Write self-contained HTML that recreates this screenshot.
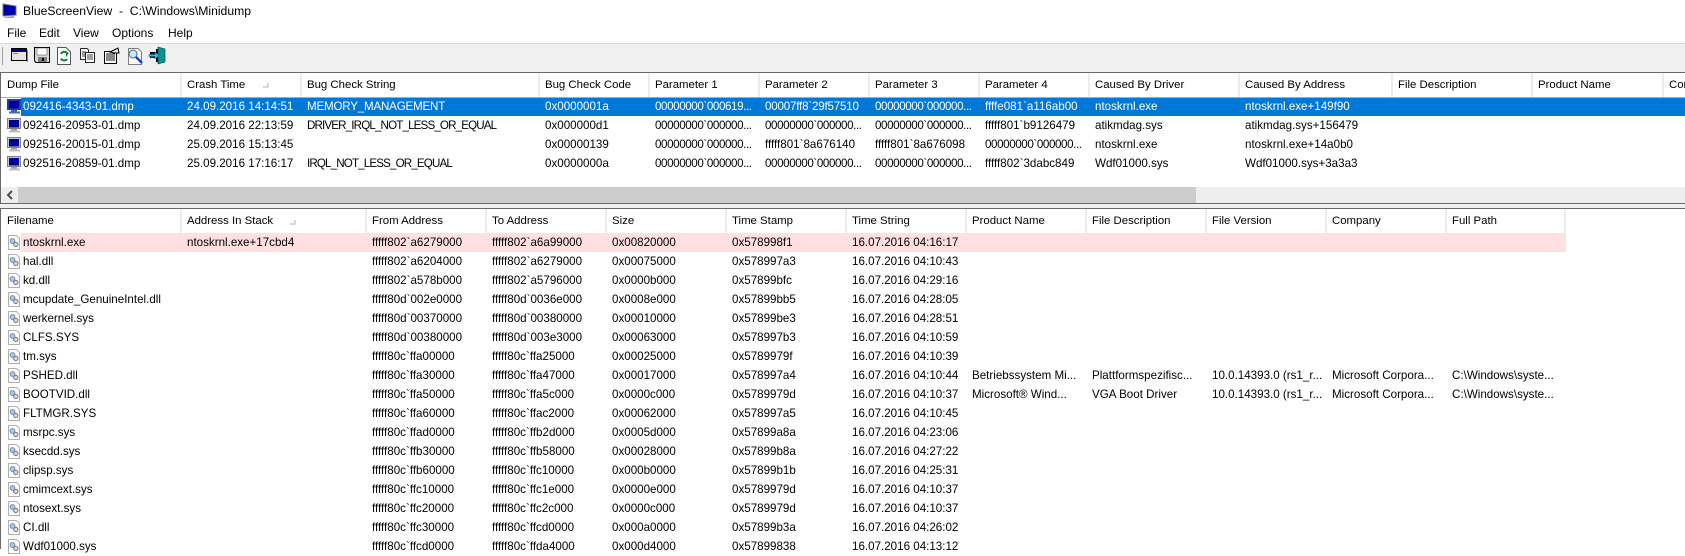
<!DOCTYPE html>
<html><head><meta charset="utf-8"><title>BlueScreenView</title>
<style>
html,body{margin:0;padding:0;background:#fff}
body{width:1685px;height:549px;overflow:hidden;position:relative;font-family:"Liberation Sans",sans-serif;font-size:11.6px;color:#000}
.a{position:absolute;white-space:nowrap}
.b{z-index:5}
table{position:absolute;border-collapse:separate;border-spacing:0;table-layout:fixed;left:0}
td{padding:0 0 0 7px;height:19px;line-height:19px;white-space:nowrap;overflow:hidden;box-sizing:border-box}
td:first-child{padding-left:23px;background:#fff;position:relative}
tr.h td{height:24px;line-height:24px;border-left:2px solid #ececec;padding-left:5px;font-size:11.4px}
tr.h td:first-child{padding-left:7px;border-left:0}
tr.s{background:#0078d7;color:#fff}
tr.s td{box-shadow:inset 0 1px 0 #e0a060}
tr.s td:first-child{color:#000}
tr.p{background:#ffdfdf}
td svg{position:absolute;left:7px;top:2px}
tr.s td:first-child span{position:absolute;left:21px;top:0;height:19px;width:160px;padding-left:2px;background:#0078d7;color:#fff;box-shadow:inset 0 1px 0 #e0a060}
.m{font-size:12px;top:26px}
.t{letter-spacing:-.4px}
.u{letter-spacing:-.85px}
.v{letter-spacing:-.2px}
.e{border-right:2px solid #ececec}
</style></head><body>
<svg width="0" height="0" style="position:absolute"><defs>
<symbol id="mon" viewBox="0 0 14 15"><rect x="0.5" y="0.5" width="13" height="10" fill="#c8c8c8" stroke="#808080"/><rect x="2" y="2" width="10" height="7.5" fill="#000099"/><rect x="4" y="11" width="6" height="1.5" fill="#a0a0a0"/><rect x="2" y="12.5" width="11" height="2" fill="#c0c0c0"/></symbol>
<symbol id="mons" viewBox="0 0 14 15"><rect x="0" y="0" width="14" height="11" fill="#1a3fae"/><rect x="2" y="2" width="10" height="7.5" fill="#000099"/><rect x="4" y="11" width="6" height="1.5" fill="#3060b0"/><rect x="2" y="12.5" width="11" height="2" fill="#3a70c0"/></symbol>
<symbol id="drv" viewBox="0 0 14 15"><path d="M1.5 .5H9.5L12.5 3.5V14.5H1.5Z" fill="#fff" stroke="#b0b0b0"/><circle cx="5.5" cy="6" r="2.4" fill="#b8c8dc" stroke="#6a8ab0"/><circle cx="8.8" cy="9.4" r="2.2" fill="#cfd8e4" stroke="#6a7a90"/></symbol>
</defs></svg>

<svg class="a" style="left:2px;top:3px" width="15" height="16" viewBox="0 0 15 16"><path d="M1 1L14 3V12L1 13Z" fill="#0000a8" stroke="#707080"/><path d="M2 14L12 13V15H3Z" fill="#a0a0a0"/></svg>
<div class="a" style="left:23px;top:3px;font-size:12.2px;line-height:16px;white-space:pre">BlueScreenView  -  C:\Windows\Minidump</div>
<div class="a m" style="left:7px">File</div>
<div class="a m" style="left:39px">Edit</div>
<div class="a m" style="left:73px">View</div>
<div class="a m" style="left:112px">Options</div>
<div class="a m" style="left:168px">Help</div>

<div class="a" style="left:0;top:43px;width:1685px;height:29px;background:#f0f0f0;border-top:1px solid #d8d8d8;box-sizing:border-box"></div>
<div class="a" style="left:2px;top:47px;width:1px;height:18px;background:#a0a0a0"></div>
<svg class="a" style="left:10px;top:46px" width="160" height="20" viewBox="0 0 160 20">
<rect x="1.5" y="2.5" width="15" height="12" fill="#e8e4d8" stroke="#000"/><rect x="2" y="3" width="14" height="3" fill="#000080"/><rect x="3" y="7" width="5" height="1" fill="#808080"/><rect x="17" y="4" width="1" height="12" fill="#808080"/>
<path d="M24.5 1.5H39.5V16.5H26L24.5 15Z" fill="#d8d8d0" stroke="#000"/><rect x="27" y="2" width="10" height="7" fill="#fff" stroke="#444" stroke-width=".5"/><rect x="28" y="11" width="9" height="5" fill="#808080"/><rect x="32" y="12" width="2" height="3" fill="#000"/>
<path d="M47.5 1.5H56L60.5 6V18.5H47.5Z" fill="#fff" stroke="#555"/><path d="M51 8C52 5 57 5 57 8L58 6.5M57 13C56 15 52 15 51 12.5" fill="none" stroke="#0a8a2a" stroke-width="2"/>
<path d="M70.5 2.5H77L78.5 4V6M70.5 2.5V13.5H75" fill="#fff" stroke="#222"/><rect x="75.5" y="6.5" width="9" height="10" fill="#fff" stroke="#222"/><path d="M77 9H83M77 11H83M77 13H83M72 6H76M72 8H75M72 10H75" stroke="#444"/>
<rect x="94.5" y="5.5" width="12" height="12" fill="#fff" stroke="#000"/><path d="M96 8H105M96 10H105M96 12H105M96 14H105" stroke="#111"/><path d="M100 6L108 2L109 7L104 7Z" fill="#e8e8e8" stroke="#000"/>
<path d="M118.5 2.5H128L131.5 6V18.5H118.5Z" fill="#fff" stroke="#808080"/><circle cx="123" cy="8" r="4" fill="#cfe8f4" stroke="#3a6a9a"/><path d="M126 11L132 17" stroke="#2040c0" stroke-width="2.5"/>
<path d="M140 6H146V3H148V16H146V12H140Z" fill="#000"/><path d="M148 1L155 3V16L148 18Z" fill="#109090" stroke="#004040" stroke-width=".6"/><path d="M139 8.5H145V6L149 9.5L145 13V10.5H139Z" fill="#20c8e8" stroke="#006080" stroke-width=".5"/>
</svg>

<div class="a b" style="left:0;top:72px;width:1685px;height:1px;background:#696969"></div>
<div class="a b" style="left:0;top:72px;width:1px;height:132px;background:#696969"></div>

<table style="top:73px;width:1685px">
<colgroup><col style="width:180px"><col style="width:120px"><col style="width:238px"><col style="width:110px"><col style="width:110px"><col style="width:110px"><col style="width:110px"><col style="width:110px"><col style="width:150px"><col style="width:153px"><col style="width:140px"><col style="width:131px"><col style="width:23px"></colgroup>
<tr class="h"><td>Dump File</td><td>Crash Time</td><td>Bug Check String</td><td>Bug Check Code</td><td>Parameter 1</td><td>Parameter 2</td><td>Parameter 3</td><td>Parameter 4</td><td>Caused By Driver</td><td>Caused By Address</td><td>File Description</td><td>Product Name</td><td>Cor</td></tr>
<tr class="s"><td><svg width="14" height="15"><use href="#mons"/></svg><span>092416-4343-01.dmp</span></td><td>24.09.2016 14:14:51</td><td class="v">MEMORY_MANAGEMENT</td><td>0x0000001a</td><td class="t">00000000`000619...</td><td class="v">00007ff8`29f57510</td><td class="t">00000000`000000...</td><td>ffffe081`a116ab00</td><td>ntoskrnl.exe</td><td>ntoskrnl.exe+149f90</td><td></td><td></td><td></td></tr>
<tr><td><svg width="14" height="15"><use href="#mon"/></svg>092416-20953-01.dmp</td><td>24.09.2016 22:13:59</td><td class="u">DRIVER_IRQL_NOT_LESS_OR_EQUAL</td><td>0x000000d1</td><td class="t">00000000`000000...</td><td class="t">00000000`000000...</td><td class="t">00000000`000000...</td><td>fffff801`b9126479</td><td>atikmdag.sys</td><td>atikmdag.sys+156479</td><td></td><td></td><td></td></tr>
<tr><td><svg width="14" height="15"><use href="#mon"/></svg>092516-20015-01.dmp</td><td>25.09.2016 15:13:45</td><td></td><td>0x00000139</td><td class="t">00000000`000000...</td><td>fffff801`8a676140</td><td>fffff801`8a676098</td><td class="t">00000000`000000...</td><td>ntoskrnl.exe</td><td>ntoskrnl.exe+14a0b0</td><td></td><td></td><td></td></tr>
<tr><td><svg width="14" height="15"><use href="#mon"/></svg>092516-20859-01.dmp</td><td>25.09.2016 17:16:17</td><td class="u">IRQL_NOT_LESS_OR_EQUAL</td><td>0x0000000a</td><td class="t">00000000`000000...</td><td class="t">00000000`000000...</td><td class="t">00000000`000000...</td><td>fffff802`3dabc849</td><td>Wdf01000.sys</td><td>Wdf01000.sys+3a3a3</td><td></td><td></td><td></td></tr>
</table>
<svg class="a" style="left:262px;top:81px" width="8" height="8"><path d="M1 6H6V2" fill="none" stroke="#b0b0b0"/></svg>

<div class="a" style="left:1px;top:187px;width:1684px;height:16px;background:#eee"></div>
<div class="a" style="left:18px;top:187px;width:1178px;height:16px;background:#cdcdcd"></div>
<svg class="a" style="left:5px;top:190px" width="10" height="10"><path d="M7 1L3 5L7 9" fill="none" stroke="#505050" stroke-width="2"/></svg>
<div class="a b" style="left:0;top:203px;width:1685px;height:1px;background:#696969"></div>
<div class="a" style="left:0;top:204px;width:1685px;height:4px;background:#f0f0f0"></div>
<div class="a b" style="left:0;top:208px;width:1685px;height:1px;background:#696969"></div>
<div class="a b" style="left:0;top:208px;width:1px;height:341px;background:#696969"></div>

<table style="top:209px;width:1566px">
<colgroup><col style="width:180px"><col style="width:185px"><col style="width:120px"><col style="width:120px"><col style="width:120px"><col style="width:120px"><col style="width:120px"><col style="width:120px"><col style="width:120px"><col style="width:120px"><col style="width:120px"><col style="width:121px"></colgroup>
<tr class="h"><td>Filename</td><td>Address In Stack</td><td>From Address</td><td>To Address</td><td>Size</td><td>Time Stamp</td><td>Time String</td><td>Product Name</td><td>File Description</td><td>File Version</td><td>Company</td><td class="e">Full Path</td></tr>
<tr class="p"><td><svg width="14" height="15"><use href="#drv"/></svg><span style="position:absolute;left:21px;top:0;width:159px;height:19px;padding-left:2px;background:#ffdfdf">ntoskrnl.exe</span></td><td>ntoskrnl.exe+17cbd4</td><td>fffff802`a6279000</td><td>fffff802`a6a99000</td><td>0x00820000</td><td>0x578998f1</td><td>16.07.2016 04:16:17</td><td></td><td></td><td></td><td></td><td></td></tr>
<tr><td><svg width="14" height="15"><use href="#drv"/></svg>hal.dll</td><td></td><td>fffff802`a6204000</td><td>fffff802`a6279000</td><td>0x00075000</td><td>0x578997a3</td><td>16.07.2016 04:10:43</td><td></td><td></td><td></td><td></td><td></td></tr>
<tr><td><svg width="14" height="15"><use href="#drv"/></svg>kd.dll</td><td></td><td>fffff802`a578b000</td><td>fffff802`a5796000</td><td>0x0000b000</td><td>0x57899bfc</td><td>16.07.2016 04:29:16</td><td></td><td></td><td></td><td></td><td></td></tr>
<tr><td><svg width="14" height="15"><use href="#drv"/></svg>mcupdate_GenuineIntel.dll</td><td></td><td>fffff80d`002e0000</td><td>fffff80d`0036e000</td><td>0x0008e000</td><td>0x57899bb5</td><td>16.07.2016 04:28:05</td><td></td><td></td><td></td><td></td><td></td></tr>
<tr><td><svg width="14" height="15"><use href="#drv"/></svg>werkernel.sys</td><td></td><td>fffff80d`00370000</td><td>fffff80d`00380000</td><td>0x00010000</td><td>0x57899be3</td><td>16.07.2016 04:28:51</td><td></td><td></td><td></td><td></td><td></td></tr>
<tr><td><svg width="14" height="15"><use href="#drv"/></svg>CLFS.SYS</td><td></td><td>fffff80d`00380000</td><td>fffff80d`003e3000</td><td>0x00063000</td><td>0x578997b3</td><td>16.07.2016 04:10:59</td><td></td><td></td><td></td><td></td><td></td></tr>
<tr><td><svg width="14" height="15"><use href="#drv"/></svg>tm.sys</td><td></td><td>fffff80c`ffa00000</td><td>fffff80c`ffa25000</td><td>0x00025000</td><td>0x5789979f</td><td>16.07.2016 04:10:39</td><td></td><td></td><td></td><td></td><td></td></tr>
<tr><td><svg width="14" height="15"><use href="#drv"/></svg>PSHED.dll</td><td></td><td>fffff80c`ffa30000</td><td>fffff80c`ffa47000</td><td>0x00017000</td><td>0x578997a4</td><td>16.07.2016 04:10:44</td><td>Betriebssystem Mi...</td><td>Plattformspezifisc...</td><td>10.0.14393.0 (rs1_r...</td><td>Microsoft Corpora...</td><td>C:\Windows\syste...</td></tr>
<tr><td><svg width="14" height="15"><use href="#drv"/></svg>BOOTVID.dll</td><td></td><td>fffff80c`ffa50000</td><td>fffff80c`ffa5c000</td><td>0x0000c000</td><td>0x5789979d</td><td>16.07.2016 04:10:37</td><td>Microsoft® Wind...</td><td>VGA Boot Driver</td><td>10.0.14393.0 (rs1_r...</td><td>Microsoft Corpora...</td><td>C:\Windows\syste...</td></tr>
<tr><td><svg width="14" height="15"><use href="#drv"/></svg>FLTMGR.SYS</td><td></td><td>fffff80c`ffa60000</td><td>fffff80c`ffac2000</td><td>0x00062000</td><td>0x578997a5</td><td>16.07.2016 04:10:45</td><td></td><td></td><td></td><td></td><td></td></tr>
<tr><td><svg width="14" height="15"><use href="#drv"/></svg>msrpc.sys</td><td></td><td>fffff80c`ffad0000</td><td>fffff80c`ffb2d000</td><td>0x0005d000</td><td>0x57899a8a</td><td>16.07.2016 04:23:06</td><td></td><td></td><td></td><td></td><td></td></tr>
<tr><td><svg width="14" height="15"><use href="#drv"/></svg>ksecdd.sys</td><td></td><td>fffff80c`ffb30000</td><td>fffff80c`ffb58000</td><td>0x00028000</td><td>0x57899b8a</td><td>16.07.2016 04:27:22</td><td></td><td></td><td></td><td></td><td></td></tr>
<tr><td><svg width="14" height="15"><use href="#drv"/></svg>clipsp.sys</td><td></td><td>fffff80c`ffb60000</td><td>fffff80c`ffc10000</td><td>0x000b0000</td><td>0x57899b1b</td><td>16.07.2016 04:25:31</td><td></td><td></td><td></td><td></td><td></td></tr>
<tr><td><svg width="14" height="15"><use href="#drv"/></svg>cmimcext.sys</td><td></td><td>fffff80c`ffc10000</td><td>fffff80c`ffc1e000</td><td>0x0000e000</td><td>0x5789979d</td><td>16.07.2016 04:10:37</td><td></td><td></td><td></td><td></td><td></td></tr>
<tr><td><svg width="14" height="15"><use href="#drv"/></svg>ntosext.sys</td><td></td><td>fffff80c`ffc20000</td><td>fffff80c`ffc2c000</td><td>0x0000c000</td><td>0x5789979d</td><td>16.07.2016 04:10:37</td><td></td><td></td><td></td><td></td><td></td></tr>
<tr><td><svg width="14" height="15"><use href="#drv"/></svg>CI.dll</td><td></td><td>fffff80c`ffc30000</td><td>fffff80c`ffcd0000</td><td>0x000a0000</td><td>0x57899b3a</td><td>16.07.2016 04:26:02</td><td></td><td></td><td></td><td></td><td></td></tr>
<tr><td><svg width="14" height="15"><use href="#drv"/></svg>Wdf01000.sys</td><td></td><td>fffff80c`ffcd0000</td><td>fffff80c`ffda4000</td><td>0x000d4000</td><td>0x57899838</td><td>16.07.2016 04:13:12</td><td></td><td></td><td></td><td></td><td></td></tr>
</table>
<svg class="a" style="left:289px;top:218px" width="8" height="8"><path d="M1 6H6V2" fill="none" stroke="#b0b0b0"/></svg>
</body></html>
